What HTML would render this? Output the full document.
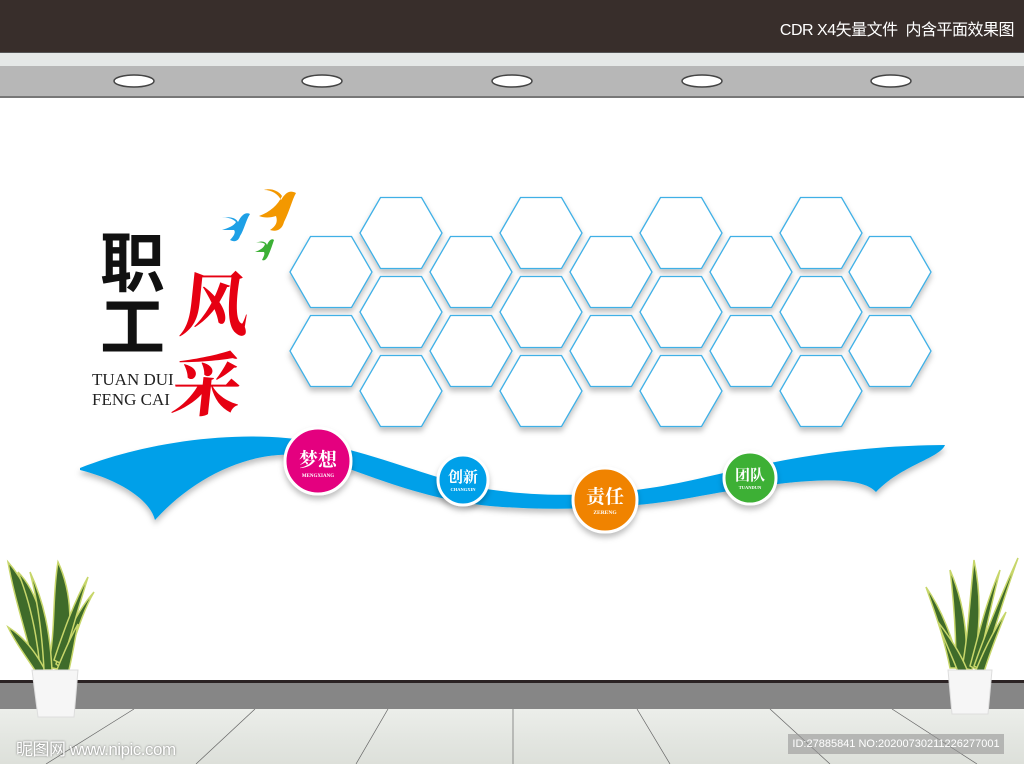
<!DOCTYPE html>
<html><head><meta charset="utf-8"><style>
body{margin:0;width:1024px;height:764px;overflow:hidden;position:relative;background:#fff;font-family:"Liberation Sans","Noto Sans CJK SC",sans-serif}
.a{position:absolute}
</style></head><body>
<div class="a" style="left:0;top:0;width:1024px;height:52px;background:#382e2b"></div>
<div class="a" style="right:10px;top:16px;color:#fff;font-size:16px;font-family:'Liberation Sans','Noto Sans CJK SC',sans-serif;letter-spacing:-0.5px">CDR X4矢量文件&nbsp;&nbsp;内含平面效果图</div>
<div class="a" style="left:0;top:52px;width:1024px;height:14px;background:#e5e8e7;border-top:1px solid #555"></div>
<div class="a" style="left:0;top:66px;width:1024px;height:30px;background:#b7b7b7"></div>
<div class="a" style="left:0;top:96px;width:1024px;height:2px;background:#777"></div>
<svg class="a" style="left:0;top:66px" width="1024" height="30">
<g fill="#fff" stroke="#444" stroke-width="1.5">
<ellipse cx="134" cy="15" rx="20" ry="6"/><ellipse cx="322" cy="15" rx="20" ry="6"/><ellipse cx="512" cy="15" rx="20" ry="6"/><ellipse cx="702" cy="15" rx="20" ry="6"/><ellipse cx="891" cy="15" rx="20" ry="6"/></g></svg>

<svg class="a" style="left:0;top:0" width="1024" height="680">
<defs><filter id="sh" x="-20%" y="-20%" width="140%" height="150%"><feDropShadow dx="0" dy="4" stdDeviation="3" flood-color="#000" flood-opacity="0.25"/></filter>
<polygon id="h" points="-41,0 -20.5,-35.5 20.5,-35.5 41,0 20.5,35.5 -20.5,35.5" fill="#fff" stroke="#3fb0e6" stroke-width="1.3"/></defs>
<g filter="url(#sh)">
<use href="#h" x="331" y="272"/><use href="#h" x="331" y="351"/>
<use href="#h" x="401" y="233"/><use href="#h" x="401" y="312"/><use href="#h" x="401" y="391"/>
<use href="#h" x="471" y="272"/><use href="#h" x="471" y="351"/>
<use href="#h" x="541" y="233"/><use href="#h" x="541" y="312"/><use href="#h" x="541" y="391"/>
<use href="#h" x="611" y="272"/><use href="#h" x="611" y="351"/>
<use href="#h" x="681" y="233"/><use href="#h" x="681" y="312"/><use href="#h" x="681" y="391"/>
<use href="#h" x="751" y="272"/><use href="#h" x="751" y="351"/>
<use href="#h" x="821" y="233"/><use href="#h" x="821" y="312"/><use href="#h" x="821" y="391"/>
<use href="#h" x="890" y="272"/><use href="#h" x="890" y="351"/>
</g>
<path filter="url(#sh)" fill="#00a0e9" d="M80,468 C150,440 250,428 320,443 C380,455 430,478 480,488 C540,498 600,496 650,488 C720,478 800,446 945,445 C940,458 900,466 876,492 C860,474 800,478 700,496 C640,508 560,512 490,506 C430,500 380,480 330,462 C270,440 200,470 155,520 C150,500 120,480 80,470 Z"/>
<g filter="url(#sh)" stroke="#fff" stroke-width="3">
<circle cx="318" cy="461" r="33" fill="#e4007f"/>
<circle cx="463" cy="480" r="25" fill="#00a0e9"/>
<circle cx="605" cy="500" r="32" fill="#f08300"/>
<circle cx="750" cy="478" r="26" fill="#3cb035"/>
</g>
<g fill="#fff" font-family="'Liberation Serif','Noto Serif CJK SC',serif" font-weight="bold" text-anchor="middle">
<text x="318" y="466" font-size="19">梦想</text><text x="318" y="477" font-size="5">MENGXIANG</text>
<text x="463" y="482" font-size="15">创新</text><text x="463" y="491" font-size="4.5">CHANGXIN</text>
<text x="605" y="503" font-size="19">责任</text><text x="605" y="514" font-size="5.5">ZERENG</text>
<text x="750" y="480" font-size="15">团队</text><text x="750" y="489" font-size="4.5">TUANDUN</text>
</g>
<path fill="#f39800" d="M259,216 C270,212 278,205 282,196 C278,190 270,188 264,190 C272,190 278,194 281,200 C286,192 290,190 296,193 C292,200 290,210 284,222 C282,230 276,232 270,230 C276,226 278,222 276,216 C270,218 264,218 259,216Z"/>
<path fill="#1ea0e6" d="M222,230 C228,228 234,226 236,222 C232,218 226,217 222,218 C230,216 236,218 238,222 C242,214 246,212 250,214 C246,220 244,230 240,236 C238,242 234,242 230,240 C234,236 236,232 234,230Z"/>
<path fill="#3cb035" d="M255,252 C260,250 264,248 265,244 C262,242 258,242 256,243 C262,240 266,242 267,245 C269,240 272,238 274,240 C272,246 270,252 268,256 C266,260 264,261 262,260 C264,256 265,254 264,252Z"/>
</svg>
<div class="a" style="left:100px;top:232px;font-size:65px;font-weight:bold;color:#111;line-height:64px;font-family:'Liberation Sans','Noto Sans CJK SC',sans-serif">职<br>工</div>
<div class="a" style="left:176px;top:268px;font-size:70px;color:#e60012;line-height:80px;font-family:'Liberation Serif','Noto Serif CJK SC',serif;font-weight:bold;transform:skewX(-6deg)">风<br>采</div>
<div class="a" style="left:92px;top:370px;font-size:17px;color:#222;line-height:20px;font-family:'Liberation Serif',serif">TUAN DUI<br>FENG CAI</div>

<div class="a" style="left:0;top:680px;width:1024px;height:3px;background:#2a2223"></div>
<div class="a" style="left:0;top:683px;width:1024px;height:26px;background:#868686"></div>
<div class="a" style="left:0;top:709px;width:1024px;height:55px;background:linear-gradient(180deg,#eceeea,#e2e5e0 60%,#dde0da)"></div>
<svg class="a" style="left:0;top:709px" width="1024" height="55"><g stroke="#666" stroke-width="0.7">
<line x1="134" y1="0" x2="46" y2="55"/><line x1="255" y1="0" x2="196" y2="55"/><line x1="388" y1="0" x2="356" y2="55"/><line x1="513" y1="0" x2="513" y2="55"/><line x1="637" y1="0" x2="670" y2="55"/><line x1="770" y1="0" x2="830" y2="55"/><line x1="892" y1="0" x2="977" y2="55"/></g></svg>
<div class="a" style="left:16px;top:735px;color:#fff;font-size:17px;text-shadow:0 0 2px #666;letter-spacing:-0.5px">昵图网 www.nipic.com</div>
<div class="a" style="left:788px;top:734px;width:216px;height:20px;background:rgba(150,150,150,0.6);color:#fff;font-size:11px;line-height:20px;text-align:center">ID:27885841 NO:20200730211226277001</div>

<svg class="a" style="left:0;top:552px" width="110" height="180">
<g fill="#3f6b2a" stroke="#c7d66a" stroke-width="1.5">
<path d="M8,10 C30,35 42,70 46,115 L34,115 C26,80 14,45 8,10Z"/>
<path d="M18,20 C38,40 46,75 50,115 L40,115 C36,75 28,45 18,20Z"/>
<path d="M58,10 C72,40 74,80 62,118 L48,115 C56,80 52,45 58,10Z"/>
<path d="M94,40 C82,60 74,90 64,118 L56,112 C66,82 78,58 94,40Z"/>
<path d="M88,25 C80,50 72,80 62,112 L54,108 C64,78 74,50 88,25Z"/>
<path d="M8,75 C24,85 36,100 46,120 L36,120 C26,104 16,92 8,75Z"/>
<path d="M78,72 C74,92 72,106 68,122 L56,120 C64,100 70,86 78,72Z"/>
<path d="M30,20 C44,50 50,80 52,118 L44,118 C42,80 38,50 30,20Z"/>
</g>
<path d="M32,118 L78,118 L74,165 L38,165Z" fill="#f6f6f6" stroke="#ddd"/>
</svg>
<svg class="a" style="left:922px;top:552px" width="100" height="180">
<g fill="#3f6b2a" stroke="#c7d66a" stroke-width="1.5">
<path d="M4,35 C20,58 30,85 38,116 L28,116 C22,85 12,58 4,35Z"/>
<path d="M28,18 C42,50 46,85 44,118 L34,116 C34,85 32,50 28,18Z"/>
<path d="M52,8 C60,45 58,85 50,118 L40,116 C46,85 48,45 52,8Z"/>
<path d="M78,18 C70,50 62,85 56,118 L48,114 C56,85 64,50 78,18Z"/>
<path d="M96,6 C82,45 70,85 60,118 L52,114 C64,80 78,45 96,6Z"/>
<path d="M16,70 C30,88 40,104 46,120 L36,120 C30,104 22,88 16,70Z"/>
<path d="M84,60 C76,80 68,100 62,120 L54,118 C62,98 72,78 84,60Z"/>
</g>
<path d="M26,118 L70,118 L66,162 L30,162Z" fill="#f6f6f6" stroke="#ddd"/>
</svg>
</body></html>
